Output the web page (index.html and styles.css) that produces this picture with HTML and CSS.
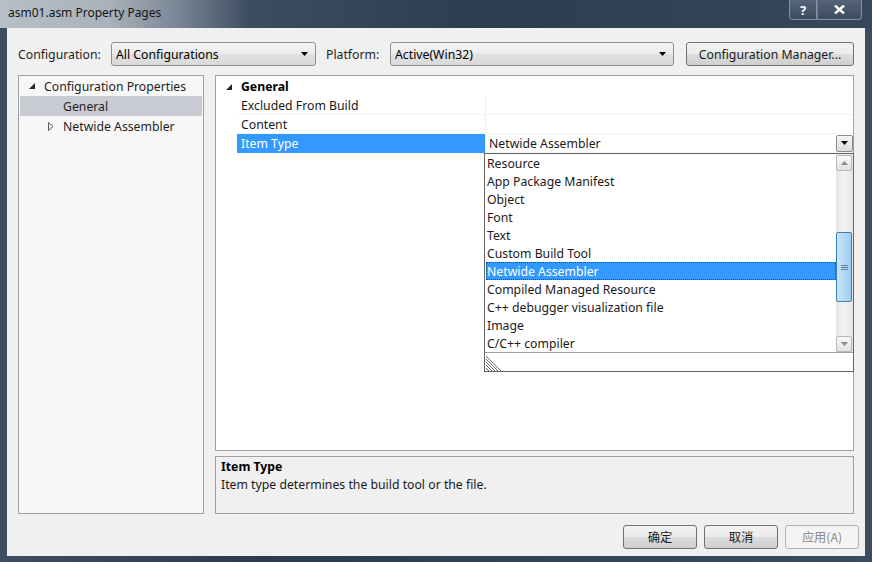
FILE: index.html
```html
<!DOCTYPE html>
<html>
<head>
<meta charset="utf-8">
<title>asm01.asm Property Pages</title>
<link rel="stylesheet" href="styles.css">
</head>
<body>
<div class="window">
  <div class="titlebar">
    <span class="title">asm01.asm Property Pages</span>
    <div class="caption-btns">
      <span class="cap help">?</span>
      <span class="cap close"><svg width="11" height="9" viewBox="0 0 11 9"><path d="M1 0.5 L10 8.5 M10 0.5 L1 8.5" stroke="#fff" stroke-width="2.4"/></svg></span>
    </div>
  </div>
  <div class="client">
    <div class="toolbar">
      <span class="lbl lbl-config">Configuration:</span>
      <div class="combo combo-config"><span>All Configurations</span><svg class="arrow" width="7" height="4" viewBox="0 0 7 4"><polygon points="0,0 7,0 3.5,4" fill="#000"/></svg></div>
      <span class="lbl lbl-platform">Platform:</span>
      <div class="combo combo-platform"><span>Active(Win32)</span><svg class="arrow" width="7" height="4" viewBox="0 0 7 4"><polygon points="0,0 7,0 3.5,4" fill="#000"/></svg></div>
      <div class="btn btn-manager">Configuration Manager...</div>
    </div>
    <div class="panes">
      <div class="tree">
        <div class="tree-row">
          <span class="twisty"><svg width="6" height="6" viewBox="0 0 6 6"><polygon points="6,0 6,6 0,6" fill="#262626"/></svg></span>
          <span>Configuration Properties</span>
        </div>
        <div class="tree-row sub selected">
          <span class="twisty"></span>
          <span>General</span>
        </div>
        <div class="tree-row sub">
          <span class="twisty"><svg width="6" height="9" viewBox="0 0 6 9"><polygon points="0.5,0.5 5,4.5 0.5,8.5" fill="none" stroke="#5a5a5a" stroke-width="1"/></svg></span>
          <span>Netwide Assembler</span>
        </div>
      </div>
      <div class="right">
        <div class="grid">
          <div class="grid-row cat">
            <div class="gutter"><svg width="6" height="6" viewBox="0 0 6 6"><polygon points="6,0 6,6 0,6" fill="#262626"/></svg></div>
            <div class="cat-name">General</div>
          </div>
          <div class="grid-row">
            <div class="gutter"></div>
            <div class="name">Excluded From Build</div>
            <div class="value"></div>
          </div>
          <div class="grid-row">
            <div class="gutter"></div>
            <div class="name">Content</div>
            <div class="value"></div>
          </div>
          <div class="grid-row">
            <div class="gutter"></div>
            <div class="name selected">Item Type</div>
            <div class="value editing">
              <span>Netwide Assembler</span>
              <span class="drop-btn"><svg width="7" height="4" viewBox="0 0 7 4"><polygon points="0,0 7,0 3.5,4" fill="#000"/></svg></span>
            </div>
          </div>
          <div class="dropdown">
            <div class="list-area">
              <ul class="items">
                <li>Resource</li>
                <li>App Package Manifest</li>
                <li>Object</li>
                <li>Font</li>
                <li>Text</li>
                <li>Custom Build Tool</li>
                <li class="hl">Netwide Assembler</li>
                <li>Compiled Managed Resource</li>
                <li>C++ debugger visualization file</li>
                <li>Image</li>
                <li>C/C++ compiler</li>
              </ul>
              <div class="scrollbar">
                <div class="sb-btn"><svg width="7" height="4" viewBox="0 0 7 4"><polygon points="0,4 7,4 3.5,0" fill="#8c8c8c"/></svg></div>
                <div class="sb-track">
                  <div class="sb-thumb"><svg width="7" height="7" viewBox="0 0 7 7"><path d="M0 1.5H7M0 3.5H7M0 5.5H7" stroke="#5d7fa3" stroke-width="1"/></svg></div>
                </div>
                <div class="sb-btn"><svg width="7" height="4" viewBox="0 0 7 4"><polygon points="0,0 7,0 3.5,4" fill="#8c8c8c"/></svg></div>
              </div>
            </div>
            <div class="grip-area">
              <svg width="15" height="15" viewBox="0 0 15 15"><path d="M0 0L15 15M0 3L12 15M0 6L9 15M0 9L6 15M0 12L3 15" stroke="#6a6a6a" stroke-width="1"/></svg>
            </div>
          </div>
        </div>
        <div class="desc">
          <div class="desc-title">Item Type</div>
          <div class="desc-text">Item type determines the build tool or the file.</div>
        </div>
      </div>
    </div>
    <div class="buttons">
      <div class="btn dlg">确定</div>
      <div class="btn dlg">取消</div>
      <div class="btn dlg disabled">应用(A)</div>
    </div>
  </div>
</div>
</body>
</html>
```
FILE: styles.css
```css
* { box-sizing: border-box; }
html, body { margin: 0; padding: 0; }
body {
  width: 872px;
  height: 562px;
  overflow: hidden;
  background: #2e3d51;
  font-family: "Noto Sans", "Noto Sans CJK SC", sans-serif;
  font-size: 12.25px;
  color: #000;
}
.window {
  height: 562px;
  display: flex;
  flex-direction: column;
  background: linear-gradient(90deg, #3e4d61 0, #2b3a4e 30%, #34445a 70%, #3c4b5f 100%);
}
.titlebar {
  height: 28px;
  flex: none;
  display: flex;
  justify-content: space-between;
  align-items: flex-start;
  background: linear-gradient(90deg, #b7bec6 0, #a9b1ba 110px, #7c8897 175px, #3c4c61 250px, #2c3c51 55%, #36465b 100%);
}
.title {
  padding: 5px 0 0 8px;
  line-height: 16px;
  font-size: 12px;
  color: #161616;
}
.caption-btns { display: flex; margin-right: 10px; }
.cap {
  height: 20px;
  display: flex;
  align-items: center;
  justify-content: center;
  color: #fff;
  font-weight: bold;
  font-size: 13px;
  border: 1px solid #8592a2;
  border-top: none;
  background: linear-gradient(180deg, #56657a, #3d4b5e);
}
.cap.help { width: 28px; border-radius: 0 0 0 4px; }
.cap.close { width: 45px; border-left-color: #6b788a; border-radius: 0 0 4px 0; }

.client {
  flex: 1;
  margin: 0 7px 6px;
  background: #f0f0f0;
  padding: 14px 11px 7px;
  display: flex;
  flex-direction: column;
}
.toolbar {
  height: 24px;
  flex: none;
  display: flex;
  align-items: center;
}
.lbl { color: #1e1e1e; }
.lbl-config { width: 93px; }
.lbl-platform { width: 64px; margin-left: 10px; }
.combo {
  height: 24px;
  border: 1px solid #8e8f8f;
  border-radius: 3px;
  background: linear-gradient(180deg, #f4f4f4 0, #ececec 50%, #e1e1e1 50%, #dadada 100%);
  display: flex;
  align-items: center;
  justify-content: space-between;
  padding: 0 7px 0 4px;
}
.combo-config { width: 205px; }
.combo-platform { width: 284px; }
.btn {
  height: 24px;
  border: 1px solid #707070;
  border-radius: 3px;
  background: linear-gradient(180deg, #f2f2f2 0, #ebebeb 50%, #dddddd 50%, #cfcfcf 100%);
  display: flex;
  align-items: center;
  justify-content: center;
  color: #1a1a1a;
}
.btn-manager { width: 168px; margin-left: 12px; }

.panes {
  flex: 1;
  margin-top: 9px;
  display: flex;
  gap: 11px;
  min-height: 0;
}
.tree {
  width: 186px;
  border: 1px solid #a0a0a0;
  background: #f7f7f7;
  padding: 0 1px;
}
.tree-row {
  height: 20px;
  display: flex;
  align-items: center;
  padding-left: 9px;
  color: #1e1e1e;
}
.tree-row.sub { padding-left: 28px; }
.tree-row.selected { background: #c9cbd3; }
.twisty {
  width: 15px;
  height: 20px;
  display: flex;
  align-items: center;
}
.right {
  flex: 1;
  display: flex;
  flex-direction: column;
  gap: 5px;
}
.grid {
  flex: 1;
  position: relative;
  border: 1px solid #a0a0a0;
  background: #fff;
  padding-top: 1px;
}
.grid-row {
  display: grid;
  grid-template-columns: 21px 248px 1fr;
  height: 19px;
}
.gutter {
  display: flex;
  align-items: center;
  padding-left: 10px;
}
.cat-name {
  grid-column: 2 / 4;
  font-weight: bold;
  padding-left: 4px;
  display: flex;
  align-items: center;
}
.name {
  padding-left: 4px;
  display: flex;
  align-items: center;
  border-bottom: 1px solid #f4f4f4;
  color: #1a1a1a;
}
.name.selected { background: #3399ff; color: #fff; border-bottom-color: #3399ff; }
.value {
  border-left: 1px solid #f0f0f0;
  border-bottom: 1px solid #f4f4f4;
}
.value.editing {
  display: flex;
  align-items: center;
  justify-content: space-between;
  padding-left: 3px;
  padding-right: 0;
  color: #1a1a1a;
}
.drop-btn {
  width: 17px;
  height: 17px;
  border: 1px solid #8a8a8a;
  border-radius: 2px;
  background: linear-gradient(180deg, #f6f6f6, #dcdcdc);
  display: flex;
  align-items: center;
  justify-content: center;
}
.dropdown {
  position: absolute;
  left: 268px;
  top: 77px;
  width: 370px;
  height: 219px;
  border: 1px solid #646464;
  background: #fff;
  display: flex;
  flex-direction: column;
}
.list-area {
  height: 199px;
  display: flex;
  border-bottom: 1px solid #a0a0a0;
}
.items {
  list-style: none;
  margin: 0;
  padding: 0 0 0 1px;
  flex: 1;
}
.items li {
  height: 18px;
  line-height: 18px;
  padding: 1px 0 0 1px;
  color: #1a1a1a;
  white-space: nowrap;
}
.items li.hl {
  background: #3399ff;
  color: #fff;
  outline: 1px dotted #1a4d80;
  outline-offset: -1px;
}
.scrollbar {
  width: 17px;
  background: linear-gradient(90deg, #e3e3e3, #f2f2f2 40%, #f2f2f2 60%, #e3e3e3);
  display: flex;
  flex-direction: column;
  padding: 1px 1px 0 0;
}
.sb-btn {
  height: 16px;
  border: 1px solid #b8b8b8;
  border-radius: 2px;
  background: linear-gradient(180deg, #f8f8f8, #e2e2e2);
  display: flex;
  align-items: center;
  justify-content: center;
}
.sb-track { flex: 1; }
.sb-thumb {
  margin-top: 61px;
  height: 70px;
  border: 1px solid #3c7fb1;
  border-radius: 2px;
  background: linear-gradient(90deg, #c8e4f8 0, #b5daf6 50%, #9fcdf0 100%);
  display: flex;
  align-items: center;
  justify-content: center;
}
.grip-area {
  flex: 1;
  display: flex;
  align-items: flex-end;
  padding: 0 0 0 1px;
}
.grip-area svg { display: block; }
.desc {
  height: 58px;
  flex: none;
  border: 1px solid #a0a0a0;
  background: #f0f0f0;
  padding: 1px 5px;
}
.desc-title { font-weight: bold; line-height: 18px; }
.desc-text { line-height: 18px; color: #1a1a1a; }

.buttons {
  height: 24px;
  flex: none;
  margin-top: 11px;
  margin-right: -5px;
  display: flex;
  justify-content: flex-end;
  gap: 7px;
}
.btn.dlg { width: 74px; font-family: "Noto Sans CJK SC", sans-serif; }
.btn.disabled {
  border-color: #adb2b5;
  background: #f4f4f4;
  color: #8a8a8a;
}
```
